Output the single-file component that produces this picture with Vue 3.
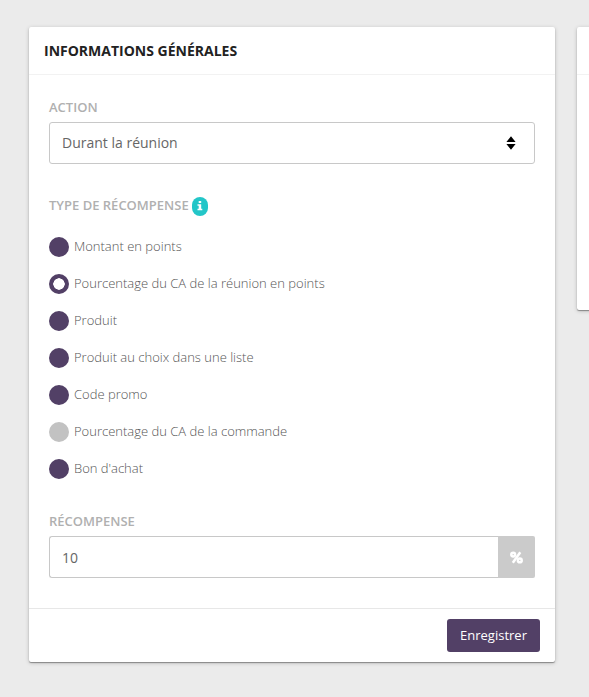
<template>
  <main class="page">
    <form class="card" @submit.prevent>
      <header class="card-header">
        <h3>Informations générales</h3>
      </header>

      <div class="card-body">
        <div class="form-group">
          <label class="form-label" for="action">Action</label>
          <div class="select-wrapper">
            <select id="action" v-model="action" class="form-control">
              <option value="meeting">Durant la réunion</option>
            </select>
            <svg class="select-arrows" width="10" height="14" viewBox="0 0 10 14">
              <path d="M5 0.3 9.6 6H0.4zM5 13.7 0.4 8h9.2z" />
            </svg>
          </div>
        </div>

        <div class="form-group reward-type">
          <div class="form-label">
            <span>Type de récompense</span>
            <span class="info-badge">
              <svg width="6" height="10" viewBox="0 0 6 10">
                <path d="M1.7 0h2.5v2.1H1.7zM0.5 3.3h3.7v4.5h1.1v1.5H0.5V7.8h1.2v-3H0.5z" />
              </svg>
            </span>
          </div>

          <label
            v-for="type in rewardTypes"
            :key="type.id"
            class="radio"
            :class="{ disabled: type.disabled }"
          >
            <input
              v-model="rewardType"
              type="radio"
              name="reward-type"
              :value="type.id"
              :disabled="type.disabled"
            />
            <span>{{ type.label }}</span>
          </label>
        </div>

        <div class="form-group">
          <label class="form-label" for="reward">Récompense</label>
          <div class="input-group">
            <input id="reward" v-model="reward" class="form-control" type="text" />
            <span class="input-addon">
              <svg width="13" height="13" viewBox="0 0 13 13">
                <circle cx="3.2" cy="3.6" r="1.9" />
                <circle cx="9.8" cy="9.4" r="1.9" />
                <path d="M10.3 1.2 2.8 11.8" />
              </svg>
            </span>
          </div>
        </div>
      </div>

      <footer class="card-footer">
        <button type="submit" class="btn">Enregistrer</button>
      </footer>
    </form>

    <section class="card side-card">
      <header class="card-header"></header>
    </section>
  </main>
</template>

<script setup>
import { ref } from "vue";

const action = ref("meeting");
const rewardType = ref("meeting-percent");
const reward = ref("10");

const rewardTypes = [
  { id: "points", label: "Montant en points" },
  { id: "meeting-percent", label: "Pourcentage du CA de la réunion en points" },
  { id: "product", label: "Produit" },
  { id: "product-list", label: "Produit au choix dans une liste" },
  { id: "promo", label: "Code promo" },
  { id: "order-percent", label: "Pourcentage du CA de la commande", disabled: true },
  { id: "voucher", label: "Bon d'achat" },
];
</script>

<style>
body {
  margin: 0;
  background: #ebebeb;
}
</style>

<style scoped>
* {
  box-sizing: border-box;
}

.page {
  display: flex;
  align-items: flex-start;
  gap: 22px;
  height: 697px;
  padding: 27px 0 0 29px;
  overflow: hidden;
  background: #ebebeb;
  font-family: "Open Sans", sans-serif;
  font-size: 13px;
}

.card {
  flex: 0 0 526px;
  height: 635px;
  background: #fff;
  border-radius: 2px;
  box-shadow: 0 1px 1px rgba(0, 0, 0, 0.35), 0 1px 4px rgba(0, 0, 0, 0.2);
}

.side-card {
  height: 283px;
}

.card-header {
  display: flex;
  align-items: center;
  height: 48px;
  padding: 0 15px;
  border-bottom: 1px solid #f2f2f2;
}

.card-header h3 {
  margin: 0;
  color: #222;
  font-size: 14px;
  font-weight: 700;
  line-height: 20px;
  text-transform: uppercase;
}

.card-body {
  height: 533px;
  padding: 22px 20px 0;
}

.form-label {
  display: flex;
  align-items: center;
  height: 20px;
  margin-bottom: 5px;
  color: #b0b0b0;
  font-size: 13px;
  font-weight: 600;
  text-transform: uppercase;
}

.form-control {
  display: block;
  appearance: none;
  width: 100%;
  height: 42px;
  margin: 0;
  padding: 0 12px;
  border: 1px solid #c8c8c8;
  border-radius: 3px;
  outline: 0;
  background: #fff;
  color: #666;
  font-family: inherit;
  font-size: 14px;
}

.select-wrapper {
  position: relative;
}

.select-wrapper .form-control {
  padding-bottom: 2px;
}

.select-arrows {
  position: absolute;
  top: 14px;
  right: 19px;
  pointer-events: none;
}

.reward-type {
  margin: 31px 0 24px;
}

.reward-type .form-label {
  height: 22px;
  margin-bottom: 11px;
}

.reward-type .form-label span:first-child {
  padding-bottom: 2px;
}

.info-badge {
  display: flex;
  align-items: center;
  justify-content: center;
  width: 16px;
  height: 19px;
  margin-left: 3px;
  border-radius: 8px;
  background: #23c6c8;
}

.info-badge svg {
  fill: #fff;
}

.radio {
  display: flex;
  align-items: center;
  gap: 5px;
  height: 37px;
  color: #555;
  font-weight: 300;
}

.radio span {
  padding-bottom: 2px;
}

.radio input {
  appearance: none;
  width: 20px;
  height: 20px;
  margin: 0;
  border: 10px solid #524066;
  border-radius: 50%;
  background: #fff;
}

.radio input:checked {
  border-width: 4.5px;
  background: radial-gradient(#fff 5.5px, #524066 6px);
}

.radio.disabled input {
  border-color: #c2c2c2;
}

.input-group {
  display: flex;
}

.input-group .form-control {
  flex: 1;
  border-right: 0;
  border-radius: 3px 0 0 3px;
}

.input-addon {
  display: flex;
  align-items: center;
  justify-content: center;
  width: 37px;
  background: #cbcbcb;
  border-radius: 0 2px 2px 0;
}

.input-addon svg {
  fill: none;
  stroke: #fff;
  stroke-width: 2.5;
}

.card-footer {
  display: flex;
  justify-content: flex-end;
  padding: 10px 15px;
  border-top: 1px solid #e7e7e7;
}

.btn {
  width: 93px;
  height: 33px;
  padding: 0 0 2px;
  border: 0;
  border-radius: 3px;
  background: #524066;
  color: #fff;
  font-family: inherit;
  font-size: 13px;
}
</style>
